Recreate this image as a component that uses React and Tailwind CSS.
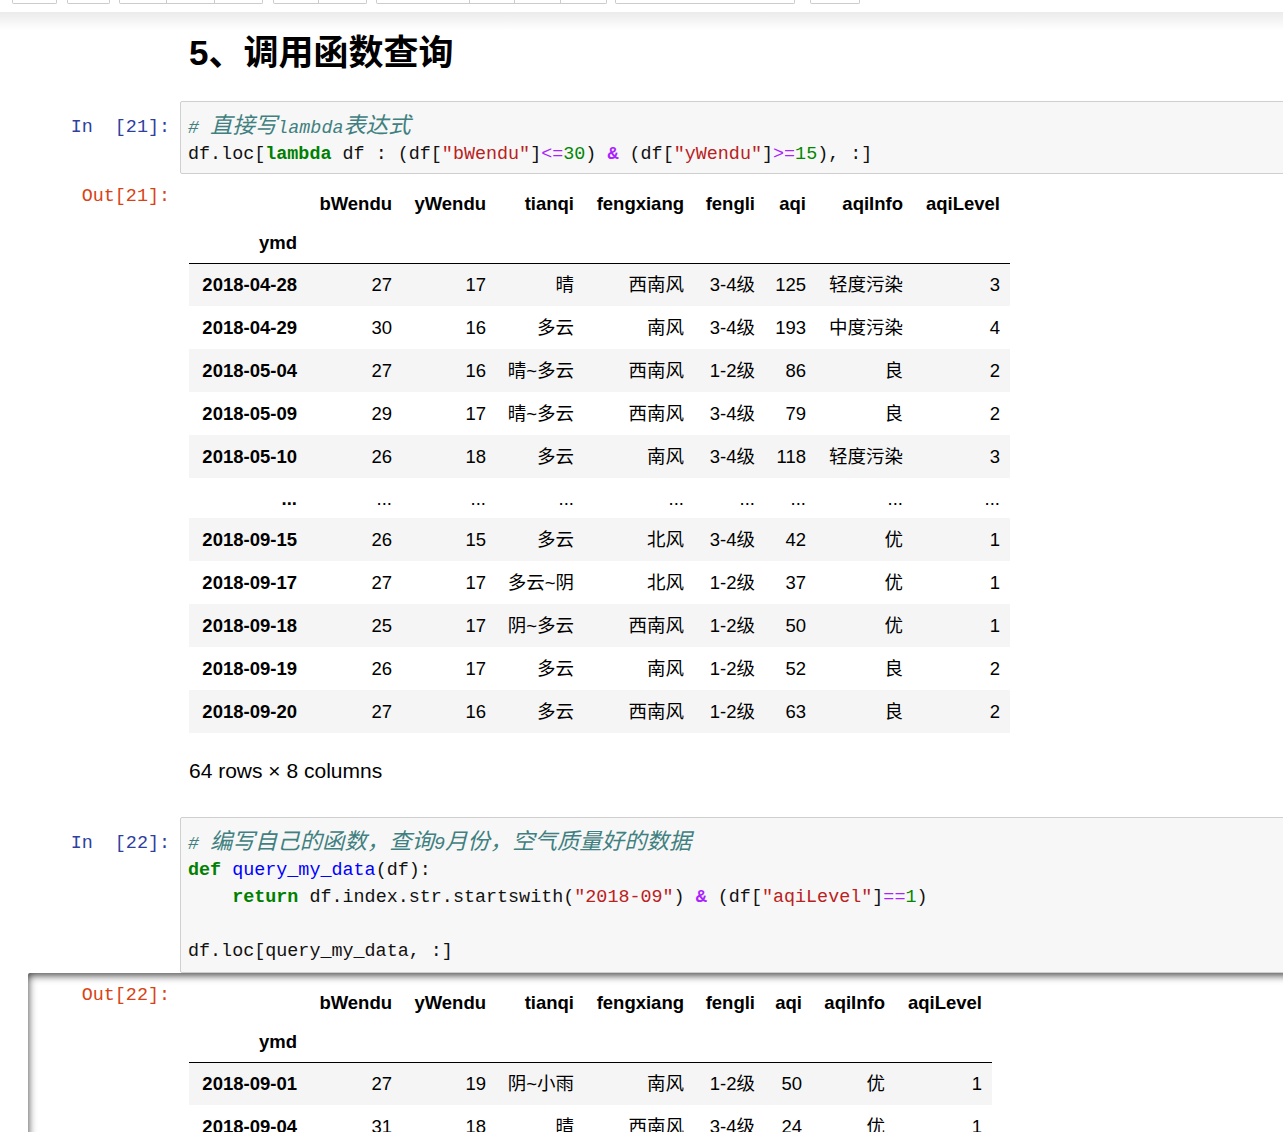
import React from 'react';

const HEAD = ['bWendu', 'yWendu', 'tianqi', 'fengxiang', 'fengli', 'aqi', 'aqiInfo', 'aqiLevel'];

const rows21 = [
  ['2018-04-28', '27', '17', '晴', '西南风', '3-4级', '125', '轻度污染', '3'],
  ['2018-04-29', '30', '16', '多云', '南风', '3-4级', '193', '中度污染', '4'],
  ['2018-05-04', '27', '16', '晴~多云', '西南风', '1-2级', '86', '良', '2'],
  ['2018-05-09', '29', '17', '晴~多云', '西南风', '3-4级', '79', '良', '2'],
  ['2018-05-10', '26', '18', '多云', '南风', '3-4级', '118', '轻度污染', '3'],
  ['...', '...', '...', '...', '...', '...', '...', '...', '...'],
  ['2018-09-15', '26', '15', '多云', '北风', '3-4级', '42', '优', '1'],
  ['2018-09-17', '27', '17', '多云~阴', '北风', '1-2级', '37', '优', '1'],
  ['2018-09-18', '25', '17', '阴~多云', '西南风', '1-2级', '50', '优', '1'],
  ['2018-09-19', '26', '17', '多云', '南风', '1-2级', '52', '良', '2'],
  ['2018-09-20', '27', '16', '多云', '西南风', '1-2级', '63', '良', '2'],
];

const rows22 = [
  ['2018-09-01', '27', '19', '阴~小雨', '南风', '1-2级', '50', '优', '1'],
  ['2018-09-04', '31', '18', '晴', '西南风', '3-4级', '24', '优', '1'],
];

const widths21 = ['w-[118px]', 'w-[95px]', 'w-[94px]', 'w-[88px]', 'w-[110px]', 'w-[71px]', 'w-[51px]', 'w-[97px]', 'w-[97px]'];
const widths22 = ['w-[118px]', 'w-[95px]', 'w-[94px]', 'w-[88px]', 'w-[110px]', 'w-[71px]', 'w-[47px]', 'w-[83px]', 'w-[97px]'];

const mono = "font-['Liberation_Mono','Noto_Sans_CJK_SC',monospace] text-[18.4px] leading-[27px]";
const sans = "font-['Liberation_Sans','Noto_Sans_CJK_SC',sans-serif]";

const Kw = ({ children }) => <span className="text-[#008000] font-bold">{children}</span>;
const Str = ({ children }) => <span className="text-[#BA2121]">{children}</span>;
const Op = ({ children }) => <span className="text-[#AA22FF]">{children}</span>;
const Amp = () => <span className="text-[#AA22FF] font-bold">&amp;</span>;
const Num = ({ children }) => <span className="text-[#008800]">{children}</span>;
const Cmt = ({ children }) => <span className="text-[#408080] italic">{children}</span>;
// CJK part of a comment, drawn a bit wider like the notebook font
const Cjk = ({ children }) => <span className="text-[22.4px] leading-[27px]">{children}</span>;

const DataTable = ({ widths, tableWidth, rows }) => (
  <table className={`table-fixed border-collapse ${tableWidth} ${sans} text-[18.5px] leading-[21px] text-black`}>
    <colgroup>
      {widths.map((w, i) => (
        <col key={i} className={w} />
      ))}
    </colgroup>
    <thead>
      <tr className="h-[40px]">
        <th className="px-[10px]" />
        {HEAD.map((h) => (
          <th key={h} className="px-[10px] text-right font-bold whitespace-nowrap">{h}</th>
        ))}
      </tr>
      <tr className="h-[40px] border-b border-black">
        <th className="px-[10px] text-right font-bold">ymd</th>
        {HEAD.map((h) => (
          <th key={h} />
        ))}
      </tr>
    </thead>
    <tbody>
      {rows.map((r, i) => (
        <tr key={i} className={`${i % 2 === 0 ? 'bg-[#f5f5f5]' : 'bg-white'} ${r[0] === '...' ? 'h-[40px]' : 'h-[43px]'}`}>
          {r.map((c, j) => (
            <td key={j} className={`px-[10px] text-right whitespace-nowrap ${j === 0 ? 'font-bold' : 'font-normal'}`}>
              {c}
            </td>
          ))}
        </tr>
      ))}
    </tbody>
  </table>
);

const Prompt = ({ label, out }) => (
  <div className={`w-[152px] shrink-0 pr-[10px] text-right whitespace-pre ${mono} ${out ? 'text-[#D84315]' : 'text-[#303F9F] pt-[13px]'}`}>
    {label}
  </div>
);

const InputBox = ({ children, pb = 'pb-[5px]' }) => (
  <div className={`flex-1 bg-[#f7f7f7] border border-[#cfcfcf] rounded-[2px] pl-[7px] pt-[12px] ${pb} whitespace-pre text-[#111] ${mono}`}>
    {children}
  </div>
);

const ToolGroup = ({ className, buttons }) => (
  <div className={`flex h-[4px] ${className}`}>
    {buttons.map((w, i) => (
      <div
        key={i}
        className={`h-[4px] bg-white border-b border-r border-[#cccccc] ${w} ${i === 0 ? 'border-l rounded-bl-[2px]' : ''} ${i === buttons.length - 1 ? 'rounded-br-[2px]' : ''}`}
      />
    ))}
  </div>
);

export default function App() {
  return (
    <div className="w-[1283px] h-[1132px] overflow-hidden bg-white">
      {/* toolbar stubs */}
      <div className="h-[12px] bg-white flex items-start">
        <ToolGroup className="ml-[12px]" buttons={['w-[45px]']} />
        <ToolGroup className="ml-[10px]" buttons={['w-[43px]']} />
        <ToolGroup className="ml-[9px]" buttons={['w-[48px]', 'w-[48px]', 'w-[48px]']} />
        <ToolGroup className="ml-[10px]" buttons={['w-[46px]', 'w-[48px]']} />
        <ToolGroup className="ml-[9px]" buttons={['w-[94px]', 'w-[45px]', 'w-[46px]', 'w-[46px]']} />
        <ToolGroup className="ml-[8px]" buttons={['w-[180px]']} />
        <ToolGroup className="ml-[15px]" buttons={['w-[50px]']} />
      </div>
      <div className="h-[18px] bg-linear-to-b from-[#ebebeb] to-white" />

      <div className="ml-[28px] w-[1300px]">
        {/* markdown heading */}
        <div className="flex mt-[2px]">
          <div className="w-[152px] shrink-0" />
          <h2 className={`pl-[9px] text-[35px] leading-[42px] font-bold text-black ${sans}`}>5、调用函数查询</h2>
        </div>

        {/* In [21] */}
        <div className="flex mt-[27px]">
          <Prompt label={'In  [21]:'} />
          <InputBox>
            <div className="h-[27px]"><Cmt># <Cjk>直接写</Cjk>lambda<Cjk>表达式</Cjk></Cmt></div>
            <div>
              df.loc[<Kw>lambda</Kw> df : (df[<Str>"bWendu"</Str>]<Op>&lt;=</Op><Num>30</Num>) <Amp /> (df[<Str>"yWendu"</Str>]<Op>&gt;=</Op><Num>15</Num>), :]
            </div>
          </InputBox>
        </div>

        {/* Out [21] */}
        <div className="flex pt-[9px]">
          <Prompt label={'Out[21]:'} out />
          <div className="pl-[9px]">
            <DataTable widths={widths21} tableWidth="w-[821px]" rows={rows21} />
            <p className={`mt-[26px] text-[21px] leading-[24px] text-black ${sans}`}>64 rows × 8 columns</p>
          </div>
        </div>

        {/* In [22] */}
        <div className="flex mt-[34px]">
          <Prompt label={'In  [22]:'} />
          <InputBox pb="pb-[7px]">
            <div className="h-[27px]"><Cmt># <Cjk>编写自己的函数，查询</Cjk>9<Cjk>月份，空气质量好的数据</Cjk></Cmt></div>
            <div>
              <Kw>def</Kw> <span className="text-[#0000FF]">query_my_data</span>(df):
            </div>
            <div>
              {'    '}<Kw>return</Kw> df.index.str.startswith(<Str>"2018-09"</Str>) <Amp /> (df[<Str>"aqiLevel"</Str>]<Op>==</Op><Num>1</Num>)
            </div>
            <div>{' '}</div>
            <div>df.loc[query_my_data, :]</div>
          </InputBox>
        </div>

        {/* Out [22] scrolled output */}
        <div className="flex h-[220px] pt-[9px] rounded-tl-[2px] shadow-[inset_0_2px_8px_rgba(0,0,0,0.8)]">
          <Prompt label={'Out[22]:'} out />
          <div className="pl-[9px]">
            <DataTable widths={widths22} tableWidth="w-[803px]" rows={rows22} />
          </div>
        </div>
      </div>
    </div>
  );
}
